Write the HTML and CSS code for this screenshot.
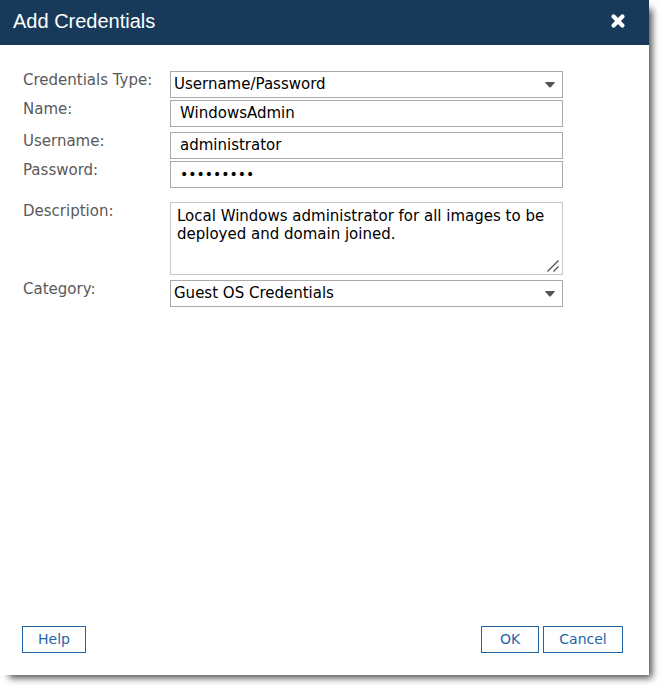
FILE: index.html
```html
<!DOCTYPE html>
<html lang="en">
<head>
    <meta charset="utf-8">
    <title>Add Credentials</title>
    <link rel="stylesheet" href="styles.css">
</head>
<body>
    <form class="dialog">
        <header class="dialog-header">
            <h1>Add Credentials</h1>
            <button type="button" class="close" aria-label="Close">
                <svg width="14" height="14" viewBox="0 0 14 14">
                    <path d="M2.6 2.6L11.4 11.4M11.4 2.6L2.6 11.4" stroke="#fff" stroke-width="4.2" stroke-linecap="round"/>
                </svg>
            </button>
        </header>

        <div class="fields">
            <div class="row">
                <label for="type">Credentials Type:</label>
                <div class="control">
                    <select id="type">
                        <option>Username/Password</option>
                    </select>
                    <svg class="arrow" width="10" height="6" viewBox="0 0 10 6"><path d="M0 .5L1 0H9L10 .5L5.5 5.5H4.5Z" fill="#555"/></svg>
                </div>
            </div>
            <div class="row row-group-end">
                <label for="name">Name:</label>
                <input type="text" id="name" value="WindowsAdmin">
            </div>
            <div class="row">
                <label for="username">Username:</label>
                <input type="text" id="username" value="administrator">
            </div>
            <div class="row row-section-end">
                <label for="password">Password:</label>
                <input type="password" id="password" value="password1">
            </div>
            <div class="row row-group-end">
                <label for="description">Description:</label>
                <div class="control">
                    <textarea id="description">Local Windows administrator for all images to be deployed and domain joined.</textarea>
                    <svg class="grip" width="12" height="12" viewBox="0 0 12 12"><path d="M.5 11.5L11.5 .5M6.5 11.5L11.5 6.5" stroke="#555" stroke-width="1.4"/></svg>
                </div>
            </div>
            <div class="row">
                <label for="category">Category:</label>
                <div class="control">
                    <select id="category">
                        <option>Guest OS Credentials</option>
                    </select>
                    <svg class="arrow" width="10" height="6" viewBox="0 0 10 6"><path d="M0 .5L1 0H9L10 .5L5.5 5.5H4.5Z" fill="#555"/></svg>
                </div>
            </div>
        </div>

        <footer class="dialog-footer">
            <button type="button" class="btn btn-help">Help</button>
            <button type="submit" class="btn btn-ok">OK</button>
            <button type="button" class="btn btn-cancel">Cancel</button>
        </footer>
    </form>
</body>
</html>
```

FILE: styles.css
```css
* {
    box-sizing: border-box;
}
body {
    margin: 0;
    padding: 0 15px 15px 0;
    background: #fff;
    font-family: "DejaVu Sans", Verdana, sans-serif;
    font-size: 15px;
    line-height: 18px;
}
.dialog {
    display: flex;
    flex-direction: column;
    min-height: calc(100vh - 15px);
    background: #fff;
    box-shadow: 6px 6px 7px -3px rgba(0, 0, 0, 0.7);
}
.dialog-header {
    display: flex;
    align-items: center;
    justify-content: space-between;
    height: 45px;
    padding: 0 24px 4px 13px;
    background: #183a5a;
    color: #fff;
}
.dialog-header h1 {
    margin: 0;
    font: 20px/24px "Liberation Sans", Arial, sans-serif;
}
.close {
    display: flex;
    padding: 0;
    border: none;
    background: none;
    cursor: pointer;
}
.fields {
    flex: 1;
    padding: 26px 86px 20px 23px;
}
.row {
    display: grid;
    grid-template-columns: 147px 1fr;
    margin-bottom: 2px;
}
.row-group-end {
    margin-bottom: 5px;
}
.row-section-end {
    margin-bottom: 14px;
}
label {
    color: #5a5a5a;
}
.control {
    position: relative;
}
input, select, textarea {
    display: block;
    width: 100%;
    height: 27px;
    border: 1px solid #aaa;
    border-radius: 0;
    background: #fff;
    color: #000;
    font: inherit;
}
input {
    padding: 0 9px 1px;
}
input[type="password"] {
    font-size: 14px;
}
select {
    appearance: none;
    padding: 0 24px 2px 3px;
}
textarea {
    height: 73px;
    padding: 4px 6px;
    border-color: #c8c8c8;
    resize: none;
}
.arrow {
    position: absolute;
    top: 11px;
    right: 8px;
    pointer-events: none;
}
.grip {
    position: absolute;
    right: 4px;
    bottom: 3px;
    pointer-events: none;
}
.dialog-footer {
    display: flex;
    gap: 4px;
    padding: 0 26px 22px 22px;
}
.btn {
    height: 27px;
    padding: 0 14px 2px;
    border: 1px solid #1f65a6;
    background: #fff;
    color: #1f65a6;
    font: inherit;
    font-size: 14px;
    cursor: pointer;
}
.btn-help {
    min-width: 64px;
    margin-right: auto;
}
.btn-ok {
    min-width: 58px;
}
.btn-cancel {
    min-width: 80px;
}
```
